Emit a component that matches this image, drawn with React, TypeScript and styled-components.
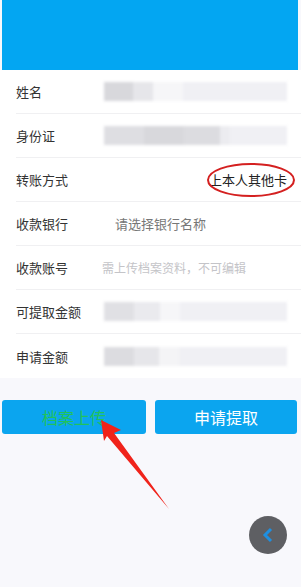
import React from 'react';
import styled, { createGlobalStyle } from 'styled-components';

const GlobalStyle = createGlobalStyle`
  html, body {
    margin: 0;
    padding: 0;
    background: #f8f8fc;
  }
  body {
    font-family: "Noto Sans CJK SC", "Noto Sans", sans-serif;
  }
`;

const Page = styled.div`
  position: relative;
  width: 301px;
  height: 587px;
  overflow: hidden;
  background: #f8f8fc;
`;

const Header = styled.div`
  height: 70px;
  margin: 0 3px 0 2px;
  background: #03a6f2;
`;

const Form = styled.div`
  background: #ffffff;
`;

const Row = styled.div<{ last?: boolean }>`
  display: flex;
  align-items: center;
  height: ${({ last }) => (last ? 44 : 43)}px;
  margin-left: 16px;
  border-bottom: ${({ last }) => (last ? 'none' : '1px solid #f0f0f2')};
`;

const Label = styled.span`
  width: 86px;
  flex-shrink: 0;
  font-size: 13px;
  color: #333;
`;

const Value = styled.span<{ tone: 'mid' | 'light'; indent?: number }>`
  padding-left: ${({ indent }) => indent || 0}px;
  font-size: ${({ tone }) => (tone === 'light' ? 12 : 13)}px;
  color: ${({ tone }) => (tone === 'mid' ? '#777' : '#c4c4c8')};
`;

const RightValue = styled.span`
  margin-left: auto;
  margin-right: 14px;
  font-size: 13px;
  color: #222;
`;

const BlurWrap = styled.div`
  flex: 1;
  height: 19px;
  margin-right: 14px;
  margin-left: 2px;
  filter: blur(1.4px);
`;

const BlurBar = styled.div`
  height: 100%;
  background: #f0f0f4;
  display: flex;
`;

const BlurBlock = styled.div<{ w: number; shade: string }>`
  width: ${({ w }) => w}px;
  height: 100%;
  background: ${({ shade }) => shade};
`;

const Spacer = styled.div`
  height: 22px;
`;

const Buttons = styled.div`
  display: grid;
  grid-template-columns: 144px 142px;
  gap: 9px;
  padding: 0 4px 0 2px;
`;

const ActionButton = styled.button<{ accent?: boolean }>`
  height: 34px;
  border: none;
  border-radius: 3px;
  background: #0ba5ef;
  color: ${({ accent }) => (accent ? '#22c25a' : '#ffffff')};
  font-family: "Noto Sans CJK SC", sans-serif;
  font-size: 16px;
  padding: 0;
`;

const Overlay = styled.svg`
  position: absolute;
  left: 0;
  top: 0;
  pointer-events: none;
`;

const BackButton = styled.div`
  position: absolute;
  left: 249px;
  top: 516px;
  width: 38px;
  height: 38px;
  border-radius: 50%;
  background: #5e5f63;
  display: flex;
  align-items: center;
  justify-content: center;
`;

type Blur = { shade: string; w: number }[];

const blurs: Record<string, Blur> = {
  name: [{ shade: '#d8d8dc', w: 29 }, { shade: '#e6e6ea', w: 20 }, { shade: '#f6f6f8', w: 30 }],
  id: [{ shade: '#dedee2', w: 40 }, { shade: '#d8d8dc', w: 40 }, { shade: '#dcdce0', w: 36 }, { shade: '#ececf0', w: 10 }],
  avail: [{ shade: '#e0e0e4', w: 30 }, { shade: '#eaeaee', w: 26 }, { shade: '#f6f6f8', w: 20 }],
  apply: [{ shade: '#dcdce0', w: 30 }, { shade: '#e6e6ea', w: 25 }, { shade: '#f4f4f6', w: 20 }],
};

const Blurred = ({ parts }: { parts: Blur }) => (
  <BlurWrap>
    <BlurBar>
      {parts.map((p, i) => (
        <BlurBlock key={i} w={p.w} shade={p.shade} />
      ))}
    </BlurBar>
  </BlurWrap>
);

const App = () => (
  <Page>
    <GlobalStyle />
    <Header />
    <Form>
      <Row>
        <Label>姓名</Label>
        <Blurred parts={blurs.name} />
      </Row>
      <Row>
        <Label>身份证</Label>
        <Blurred parts={blurs.id} />
      </Row>
      <Row>
        <Label>转账方式</Label>
        <RightValue>上本人其他卡</RightValue>
      </Row>
      <Row>
        <Label>收款银行</Label>
        <Value tone="mid" indent={13}>请选择银行名称</Value>
      </Row>
      <Row>
        <Label>收款账号</Label>
        <Value tone="light">需上传档案资料，不可编辑</Value>
      </Row>
      <Row>
        <Label>可提取金额</Label>
        <Blurred parts={blurs.avail} />
      </Row>
      <Row last>
        <Label>申请金额</Label>
        <Blurred parts={blurs.apply} />
      </Row>
    </Form>
    <Spacer />
    <Buttons>
      <ActionButton accent>档案上传</ActionButton>
      <ActionButton>申请提取</ActionButton>
    </Buttons>

    <Overlay width="301" height="587" viewBox="0 0 301 587">
      <ellipse cx="251" cy="180" rx="43" ry="16" fill="none" stroke="#d42020" strokeWidth="2" />
      {/* annotation arrow pointing at the upload button */}
      <polygon
        points="101,420 121,430 114,433 169,509 107,436 104,441"
        fill="#f0231b"
      />
    </Overlay>

    <BackButton>
      <svg width="14" height="16" viewBox="0 0 14 16">
        <polyline points="10,2 4,8 10,14" fill="none" stroke="#1e8fe0" strokeWidth="3" />
      </svg>
    </BackButton>
  </Page>
);

export default App;
